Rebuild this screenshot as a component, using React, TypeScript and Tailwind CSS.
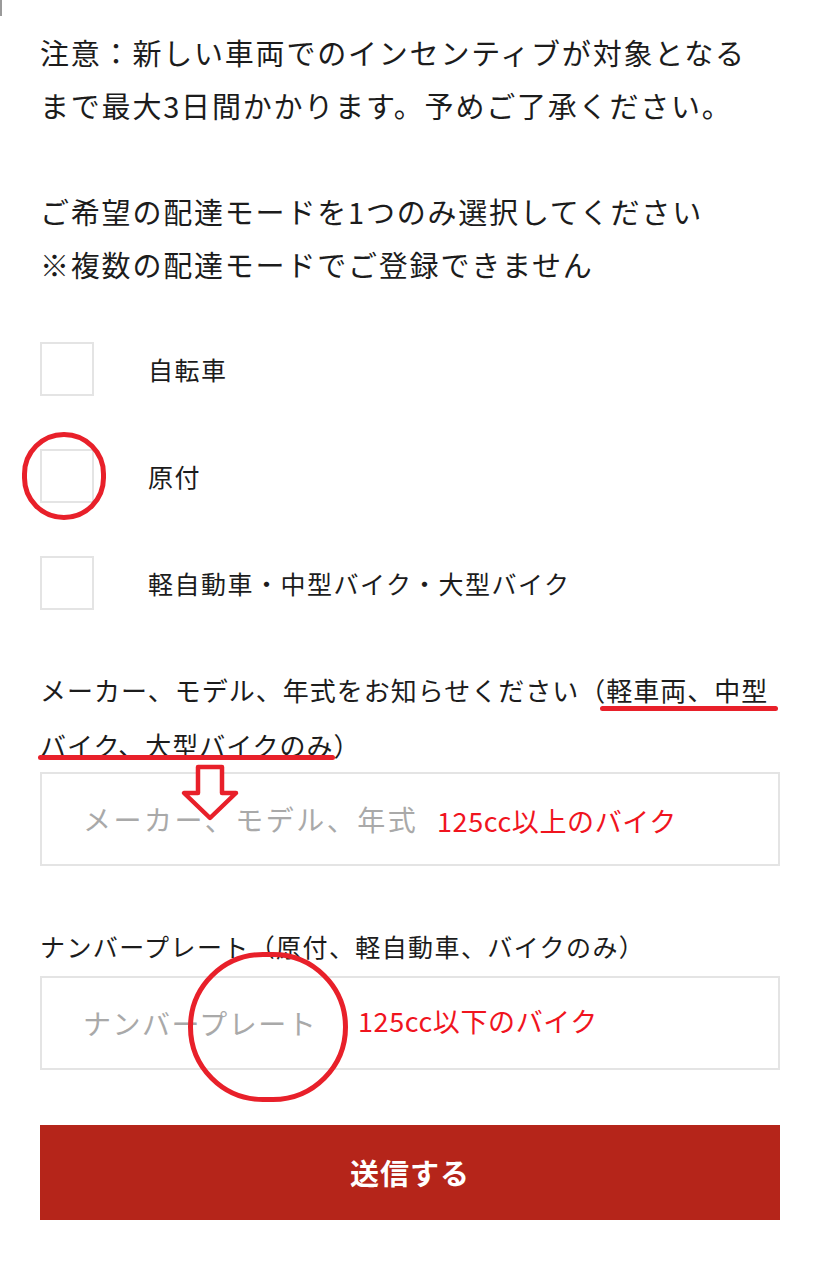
import React from "react";

const jp = { fontFamily: '"Noto Sans CJK JP", "Noto Sans", sans-serif' };

function Checkbox({ label }: { label: string }) {
  return (
    <div className="flex h-[54px] items-center">
      <div className="h-[54px] w-[54px] shrink-0 border-2 border-[#e4e4e4] bg-white" />
      <span className="ml-[54px] whitespace-nowrap text-[25px] leading-none tracking-[1.5px] text-[#1c1c1c]">
        {label}
      </span>
    </div>
  );
}

export default function App() {
  return (
    <div className="relative min-h-[1280px] w-[821px] bg-white" style={jp}>
      <div className="absolute left-0 top-0 h-[16px] w-[2px] bg-[#9a9a9a]" />
      <div className="pl-[40px] pr-[41px] pt-[26px]">
        <p className="whitespace-nowrap text-[29px] leading-[53px] tracking-[1.8px] text-[#1c1c1c]">
          注意：新しい車両でのインセンティブが対象となる
          <br />
          まで最大3日間かかります。予めご了承ください。
          <br />
          <br />
          ご希望の配達モードを1つのみ選択してください
          <br />
          ※複数の配達モードでご登録できません
        </p>

        <div className="mt-[51px] flex flex-col gap-[53px]">
          <Checkbox label="自転車" />
          <Checkbox label="原付" />
          <Checkbox label="軽自動車・中型バイク・大型バイク" />
        </div>

        <p className="mt-[52px] whitespace-nowrap text-[26px] leading-[55px] tracking-[1px] text-[#1c1c1c]">
          メーカー、モデル、年式をお知らせください（軽車両、中型
          <br />
          バイク、大型バイクのみ）
        </p>
        <div className="flex h-[94px] items-center border-2 border-[#e4e4e4] pl-[41px]">
          <span className="whitespace-nowrap text-[28px] tracking-[2.5px] text-[#a9a9a9]">
            メーカー、モデル、年式
          </span>
        </div>

        <p className="mt-[53px] whitespace-nowrap text-[25px] leading-[55px] tracking-[1.4px] text-[#1c1c1c]">
          ナンバープレート（原付、軽自動車、バイクのみ）
        </p>
        <div className="mt-[2px] flex h-[94px] items-center border-2 border-[#e4e4e4] pl-[41px]">
          <span className="whitespace-nowrap text-[28px] tracking-[1.5px] text-[#a9a9a9]">
            ナンバープレート
          </span>
        </div>

        <button className="mt-[55px] flex h-[95px] w-full items-center justify-center bg-[#b5251a] text-[29px] font-bold tracking-[1px] text-white">
          送信する
        </button>
      </div>

      {/* annotations */}
      <div className="absolute left-[22px] top-[432px] h-[88px] w-[84px] rounded-full border-[5px] border-[#e8202a]" />
      <div className="absolute left-[600px] top-[706px] h-[5px] w-[178px] rounded-full bg-[#e8202a]" />
      <div className="absolute left-[38px] top-[755px] h-[5px] w-[297px] rounded-full bg-[#e8202a]" />
      <svg className="absolute left-[180px] top-[764px]" width="60" height="60" viewBox="0 0 60 60">
        <path
          d="M18 3 H42 V29 H56 L30 54 L4 29 H18 Z"
          fill="white"
          stroke="#e8202a"
          strokeWidth="4.5"
          strokeLinejoin="round"
        />
      </svg>
      <span className="absolute left-[437px] top-[802px] whitespace-nowrap text-[27px] leading-[38px] tracking-[0.6px] text-[#f0141e]">
        125cc以上のバイク
      </span>
      <span className="absolute left-[358px] top-[1002px] whitespace-nowrap text-[27px] leading-[38px] tracking-[0.6px] text-[#f0141e]">
        125cc以下のバイク
      </span>
      <div className="absolute left-[188px] top-[952px] h-[150px] w-[160px] rounded-full border-[5px] border-[#e8202a]" />
    </div>
  );
}
